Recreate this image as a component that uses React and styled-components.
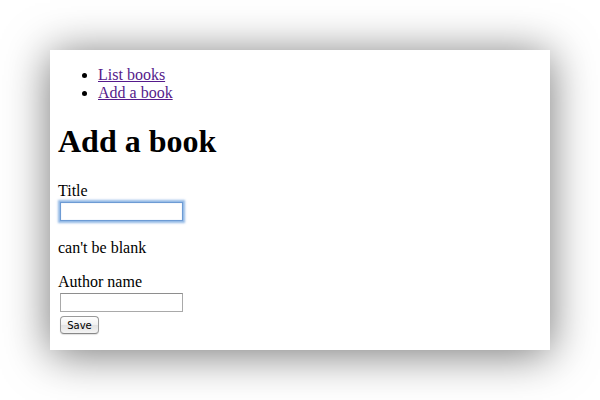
import styled, { createGlobalStyle } from 'styled-components';

const GlobalStyle = createGlobalStyle`
  html, body {
    margin: 0;
    padding: 0;
    background: #ffffff;
  }
  body {
    font-family: 'Liberation Serif', 'Times New Roman', serif;
    font-size: 16px;
    color: #000000;
  }
`;

const Page = styled.div`
  width: 600px;
  height: 400px;
  padding: 50px;
  box-sizing: border-box;
  background: #ffffff;
`;

const Window = styled.div`
  width: 500px;
  height: 300px;
  padding: 0 8px;
  box-sizing: border-box;
  background: #ffffff;
  overflow: hidden;
  box-shadow: 0 4px 42px rgba(0, 0, 0, 0.55);
`;

const NavList = styled.ul`
  margin: 16px 0;
  padding-left: 40px;
  list-style: disc;
`;

const NavItem = styled.li`
  line-height: 18px;
`;

const NavLink = styled.a`
  color: #551a8b;
  text-decoration: underline;
`;

const Heading = styled.h1`
  font-size: 32px;
  font-weight: 700;
  line-height: 37px;
  margin: 21px 0 22px;
`;

const Form = styled.form`
  display: flex;
  flex-direction: column;
  align-items: flex-start;
`;

const Label = styled.label`
  display: block;
  line-height: 18px;
`;

const TextInput = styled.input`
  display: block;
  width: 123px;
  height: 19px;
  margin: 2px 2px;
  padding: 1px 2px;
  box-sizing: border-box;
  font: 11px 'DejaVu Sans', sans-serif;
  background: #ffffff;
  border: 1px solid ${(p) => (p.$focused ? '#6d9bd4' : '#a9a9a9')};
  border-top-color: ${(p) => (p.$focused ? '#6d9bd4' : '#8e8e8e')};
  border-radius: 0;
  outline: none;
  box-shadow: ${(p) =>
    p.$focused
      ? '0 0 2px 2px rgba(110, 160, 220, 0.75), inset 0 0 1px rgba(110, 160, 220, 0.6)'
      : 'none'};
`;

const ErrorText = styled.p`
  margin: 16px 0;
  line-height: 18px;
`;

const SaveButton = styled.button`
  margin: 2px 2px;
  width: 39px;
  height: 18px;
  padding: 0;
  font: 10px 'DejaVu Sans', sans-serif;
  color: #000000;
  border: 1px solid #9a9a9a;
  border-bottom-color: #888888;
  border-radius: 4px;
  background: linear-gradient(#ffffff, #f1f1f1 50%, #e2e2e2 51%, #f4f4f4);
  box-shadow: 0 1px 1px rgba(0, 0, 0, 0.12);
`;

export default function App() {
  return (
    <>
      <GlobalStyle />
      <Page>
        <Window>
          <NavList>
            <NavItem>
              <NavLink href="#">List books</NavLink>
            </NavItem>
            <NavItem>
              <NavLink href="#">Add a book</NavLink>
            </NavItem>
          </NavList>
          <Heading>Add a book</Heading>
          <Form onSubmit={(e) => e.preventDefault()}>
            <Label htmlFor="book_title">Title</Label>
            <TextInput id="book_title" type="text" $focused />
            <ErrorText>can&apos;t be blank</ErrorText>
            <Label htmlFor="book_author">Author name</Label>
            <TextInput id="book_author" type="text" />
            <SaveButton type="submit">Save</SaveButton>
          </Form>
        </Window>
      </Page>
    </>
  );
}
